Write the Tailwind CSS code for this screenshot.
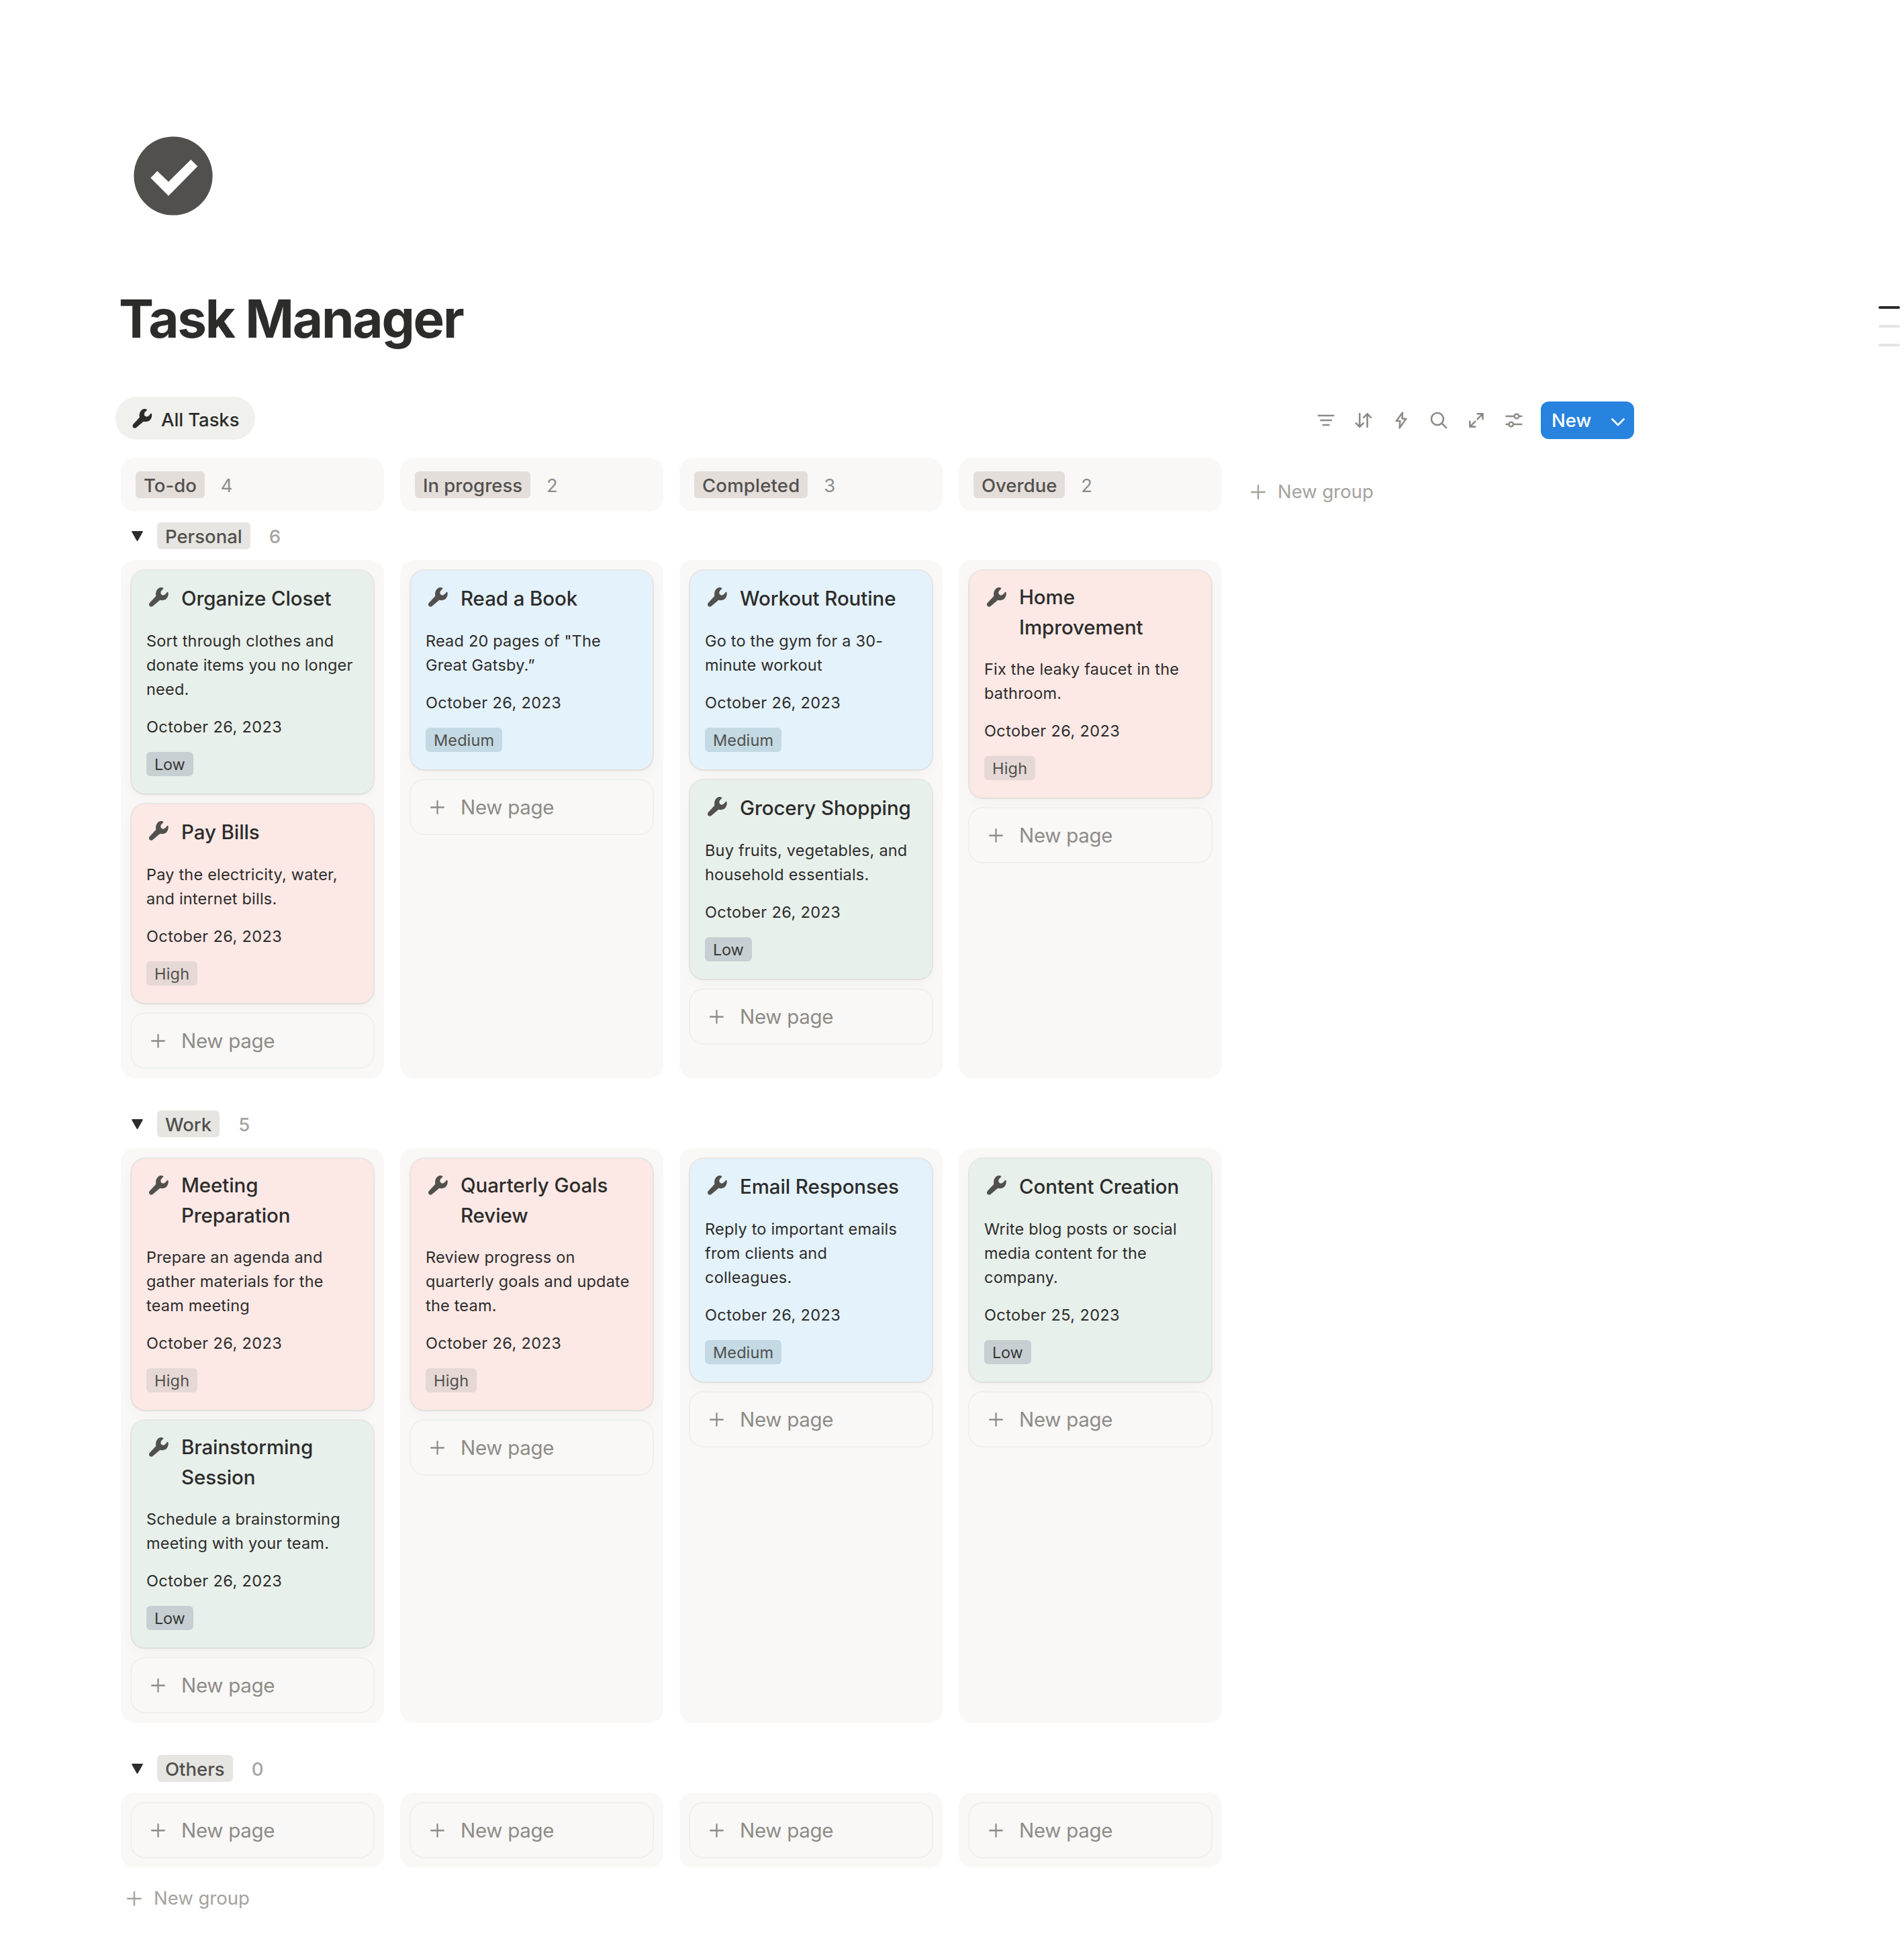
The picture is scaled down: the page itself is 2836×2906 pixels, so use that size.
<!DOCTYPE html>
<html lang="en">
<head>
<meta charset="utf-8">
<title>Task Manager</title>
<script src="https://cdn.jsdelivr.net/npm/@tailwindcss/browser@4"></script>
</head>
<body class="bg-white font-['Inter',sans-serif] text-[#2c2c2b] whitespace-nowrap">

<svg class="hidden" aria-hidden="true">
  <symbol id="wrench" viewBox="0 0 87 87">
    <path fill="currentColor" d="M48 1C54-.5 60 0 63 2C65 4 64 6 62 8C55 13 52 18 52 24C52 30 57 35 63 35C70 35 75 29 80 22C82 19 85 20 86 24C87 34 84 44 77 51C70 57 58 59 49 56L17 83C13 87 6 87 3 83C-1 80-1 74 2 70L31 38C28 24 34 6 48 1Z"/>
  </symbol>
  <symbol id="plus" viewBox="0 0 22 22">
    <path fill="none" stroke="currentColor" stroke-width="2.4" stroke-linecap="round" d="M11 1.2V20.8M1.2 11H20.8"/>
  </symbol>
  <symbol id="triangle" viewBox="0 0 17 15">
    <path fill="currentColor" d="M1 0H16Q17.2 .3 16.6 1.5L9.4 14.2Q8.5 15.4 7.6 14.2L.4 1.5Q-.2 .3 1 0Z"/>
  </symbol>
</svg>

<div class="relative w-[2836px] h-[2906px] overflow-hidden pl-[180px] pt-[203px]">

  <svg class="w-[118px] h-[118px] ml-[19px] block" viewBox="0 0 118 118">
    <circle cx="59" cy="59" r="58.6" fill="#51504d"/>
    <path fill="#fff" d="M25.3 62L35.3 51.7L52 67.7L85.3 34.7L95.3 44.7L52 88.7Z"/>
  </svg>

  <h1 class="mt-[106px] -ml-[3px] h-[96px] leading-[96px] text-[78px] font-bold tracking-[-2.15px]">Task Manager</h1>

  <div class="mt-[68px] -ml-[8px] w-[2262px] flex items-start justify-between">
    <div class="w-[208px] h-[64px] rounded-full bg-[#f0f0ed] flex items-center pl-[25px] gap-[13px]">
      <svg class="w-[30px] h-[29px]"><use href="#wrench"/></svg>
      <span class="text-[27.5px] leading-[40px] font-medium pt-[3px] tracking-[-0.1px]">All Tasks</span>
    </div>
    <div class="flex items-center gap-6 mt-[7px] text-[#8e8b86]">
      <svg class="w-8 h-8" viewBox="0 0 32 32" fill="none" stroke="currentColor" stroke-width="2.6" stroke-linecap="round"><path d="M4.8 9H27.2M8.3 16H23.8M11.6 23H20.4"/></svg>
      <svg class="w-8 h-8" viewBox="0 0 32 32" fill="none" stroke="currentColor" stroke-width="2.6" stroke-linecap="round" stroke-linejoin="round"><path d="M10.2 6.4V25.6M4.8 20.4L10.2 25.8L15.6 20.4M21.6 25.8V6.4M16.2 11.8L21.6 6.4L27 11.8"/></svg>
      <svg class="w-8 h-8" viewBox="0 0 32 32" fill="none" stroke="currentColor" stroke-width="2.5" stroke-linejoin="round"><path d="M18 4.8L8.8 17H14.4L13.6 27.4L23.4 13.8H17.6Z"/></svg>
      <svg class="w-8 h-8" viewBox="0 0 32 32" fill="none" stroke="currentColor" stroke-width="2.6" stroke-linecap="round"><circle cx="14" cy="14" r="9"/><path d="M20.5 20.5L27.2 27.2"/></svg>
      <svg class="w-8 h-8" viewBox="0 0 32 32" fill="none" stroke="currentColor" stroke-width="2.6" stroke-linecap="round" stroke-linejoin="round"><path d="M17.6 14.4L25.6 6.4M17.8 6.4H25.6V14.2M14.4 17.6L6.4 25.6M6.4 17.8V25.6H14.2"/></svg>
      <svg class="w-8 h-8" viewBox="0 0 32 32" fill="none" stroke="currentColor" stroke-width="2.5" stroke-linecap="round"><path d="M4.6 10H16.4M23.6 10H27.4M4.6 22H8.2M15.4 22H27.4"/><circle cx="20" cy="10" r="3.3"/><circle cx="11.8" cy="22" r="3.3"/></svg>
      <div class="w-[139px] h-[56px] rounded-[12px] bg-[#2783de] text-white flex items-center justify-between pl-[16px] pr-[14px]">
        <span class="text-[27.5px] leading-[40px] font-medium">New</span>
        <svg class="w-[20px] h-[12px] mt-[5px]" viewBox="0 0 20 12" fill="none" stroke="currentColor" stroke-width="2.8" stroke-linecap="round" stroke-linejoin="round"><path d="M1.5 1.6L10 10.1L18.5 1.6"/></svg>
      </div>
    </div>
  </div>

  <!-- Status columns -->
  <div class="mt-[27px] flex gap-6 text-[27.5px]">
    <div id="statuses" class="flex gap-6"></div>
    <div class="mt-[31px] ml-[19px] h-[40px] flex items-center gap-[18px] text-[#a5a29d]"><svg class="w-[22px] h-[22px]"><use href="#plus"/></svg><span>New group</span></div>
  </div>

  <div id="board"></div>

  <div class="mt-[26px] ml-[9px] h-[40px] flex items-center gap-[18px] text-[27.5px] text-[#a5a29d]"><svg class="w-[22px] h-[22px]"><use href="#plus"/></svg><span>New group</span></div>

  <!-- Outline markers floating over the page's right edge -->
  <div class="absolute right-[6px] top-[456px] flex flex-col gap-6">
    <div class="w-8 h-1 rounded-[2px] bg-[#2c2c2b]"></div>
    <div class="w-8 h-1 rounded-[2px] bg-[#e6e4e1]"></div>
    <div class="w-8 h-1 rounded-[2px] bg-[#e6e4e1]"></div>
  </div>
</div>

<script>
const statuses = [['To-do', 4, ''], ['In progress', 2, ''], ['Completed', 3, 'tracking-[0.2px]'], ['Overdue', 2, '']];

const priorities = {
  Low: ['bg-[#e8f0eb]', 'bg-[#c7cfd3] text-[#373735] tracking-[-0.2px]'],
  Medium: ['bg-[#e4f2fc]', 'bg-[#c3d9e3] text-[#51504d] tracking-[0.1px]'],
  High: ['bg-[#fce8e5]', 'bg-[#e5d8d5] text-[#51504d] tracking-[0.2px]'],
};

const groups = [
  { name: 'Personal', count: 6, top: 'mt-4', columns: [
    [['Organize Closet', 'Sort through clothes and<br>donate items you no longer<br>need.', 26, 'Low'],
     ['Pay Bills', 'Pay the electricity, water,<br>and internet bills.', 26, 'High']],
    [['Read a Book', 'Read 20 pages of "The<br>Great Gatsby.”', 26, 'Medium']],
    [['Workout Routine', 'Go to the gym for a 30-<br>minute workout', 26, 'Medium'],
     ['Grocery Shopping', 'Buy fruits, vegetables, and<br>household essentials.', 26, 'Low']],
    [['Home<br>Improvement', 'Fix the leaky faucet in the<br>bathroom.', 26, 'High']],
  ]},
  { name: 'Work', count: 5, top: 'mt-12', columns: [
    [['Meeting<br>Preparation', 'Prepare an agenda and<br>gather materials for the<br>team meeting', 26, 'High'],
     ['Brainstorming<br>Session', 'Schedule a brainstorming<br>meeting with your team.', 26, 'Low']],
    [['Quarterly Goals<br>Review', 'Review progress on<br>quarterly goals and update<br>the team.', 26, 'High']],
    [['Email Responses', 'Reply to important emails<br>from clients and<br>colleagues.', 26, 'Medium']],
    [['Content Creation', 'Write blog posts or social<br>media content for the<br>company.', 25, 'Low']],
  ]},
  { name: 'Others', count: 0, top: 'mt-12', columns: [[], [], [], []] },
];

const card = ([title, text, day, priority]) => `
  <article class="${priorities[priority][0]} rounded-[20px] pt-[17px] pb-[26px] px-[22px] shadow-[0_8px_24px_rgba(25,25,25,0.027),0_2px_4px_rgba(25,25,25,0.03),0_0_0_2px_rgba(42,28,0,0.07)]">
    <div class="flex items-start">
      <svg class="w-[29px] h-[29px] ml-1 mr-[19px] mt-2 text-[#51504d]"><use href="#wrench"/></svg>
      <h3 class="min-h-[48px] flex items-center text-[29.5px] leading-[45px] font-medium tracking-[-0.1px]"><span>${title}</span></h3>
    </div>
    <p class="mt-[22px] text-[23.5px] leading-[36px] tracking-[0.2px]">${text}</p>
    <p class="mt-5 text-[23.5px] leading-[36px] tracking-[0.38px]">October ${day}, 2023</p>
    <span class="mt-[19px] block w-fit px-3 pt-[2px] rounded-[6px] text-[23.5px] leading-[34px] ${priorities[priority][1]}">${priority}</span>
  </article>`;

const newPage = `
  <div class="h-[80px] rounded-[20px] bg-[#f9f8f7] shadow-[0_0_0_2px_#edf0ed] flex items-center pl-[29px] gap-[24px] text-[#8e8b86] text-[29.5px] tracking-[-0.3px]">
    <svg class="w-[21px] h-[21px]"><use href="#plus"/></svg><span class="pt-px">New page</span>
  </div>`;

document.getElementById('statuses').innerHTML = statuses.map(([name, count, tracking]) => `
  <div class="w-[392px] h-[80px] rounded-[20px] bg-[#f9f8f7] flex items-center pl-[22px] gap-6 leading-[38px]">
    <span class="bg-[#e4dedb] text-[#51504d] font-medium rounded-[6px] px-3 pt-[2px] ${tracking}">${name}</span>
    <span class="text-[#8e8c89] pt-[2px]">${count}</span>
  </div>`).join('');

document.getElementById('board').innerHTML = groups.map(g => `
  <div class="${g.top} flex items-center h-[40px] text-[27.5px] leading-[38px] font-medium">
    <svg class="w-[17px] h-[15px] ml-4 mr-[21px]"><use href="#triangle"/></svg>
    <span class="bg-[#e6e5e1] text-[#51504d] rounded-[6px] px-3 pt-[2px]">${g.name}</span>
    <span class="ml-[28px] pt-[2px] text-[#a5a4a1]">${g.count}</span>
  </div>
  <div class="mt-4 flex gap-6">${g.columns.map(cards => `
    <section class="w-[392px] rounded-[20px] bg-[#f9f8f7] p-4 flex flex-col gap-4">${cards.map(card).join('')}${newPage}</section>`).join('')}
  </div>`).join('');
</script>
</body>
</html>
